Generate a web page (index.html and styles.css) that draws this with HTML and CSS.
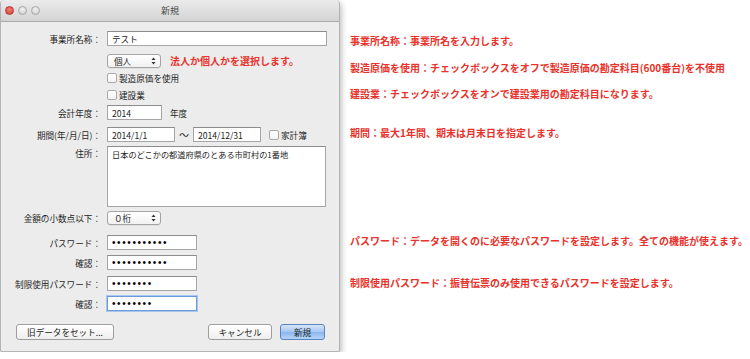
FILE: index.html
```html
<!DOCTYPE html>
<html lang="ja">
<head>
    <meta charset="UTF-8"> <!-- Zeichenkodierung -->
    <meta name="viewport" content="width=device-width, initial-scale=1.0">
    <title>新規</title>
    <link rel="stylesheet" href="styles.css">
</head>
<body>

<div class="page">
    <!-- Dialogfenster -->
    <div class="window">
        <div class="titlebar">
            <div class="lights">
                <span class="light red"></span>
                <span class="light"></span>
                <span class="light"></span>
            </div>
            <div class="title">新規</div>
            <div></div>
        </div>

        <div class="content">
            <div class="row r1">
                <label>事業所名称：</label>
                <input class="text name" type="text" value="テスト">
            </div>

            <div class="row r2">
                <span></span>
                <div class="inline">
                    <div class="popup">個人<svg class="arrows" width="5" height="8" viewBox="0 0 5 8"><path d="M0.5 3 L2.5 0.5 L4.5 3 Z M0.5 5 L2.5 7.5 L4.5 5 Z" fill="#333"/></svg></div>
                    <span class="hint">法人か個人かを選択します。</span>
                </div>
            </div>

            <div class="row r3">
                <span></span>
                <label class="check"><span class="box"></span>製造原価を使用</label>
            </div>

            <div class="row r4">
                <span></span>
                <label class="check"><span class="box"></span>建設業</label>
            </div>

            <div class="row r5">
                <label>会計年度：</label>
                <div class="inline">
                    <input class="text year" type="text" value="2014">
                    <span class="unit">年度</span>
                </div>
            </div>

            <div class="row r6">
                <label>期間(年/月/日)：</label>
                <div class="inline">
                    <input class="text date" type="text" value="2014/1/1">
                    <span class="tilde">～</span>
                    <input class="text date" type="text" value="2014/12/31">
                    <label class="check household"><span class="box"></span>家計簿</label>
                </div>
            </div>

            <div class="row r7">
                <label class="top">住所：</label>
                <textarea class="address">日本のどこかの都道府県のとある市町村の1番地</textarea>
            </div>

            <div class="row r8">
                <label>金額の小数点以下：</label>
                <div class="popup">０桁<svg class="arrows" width="5" height="8" viewBox="0 0 5 8"><path d="M0.5 3 L2.5 0.5 L4.5 3 Z M0.5 5 L2.5 7.5 L4.5 5 Z" fill="#333"/></svg></div>
            </div>

            <div class="row r9">
                <label>パスワード：</label>
                <input class="text pass" type="password" value="12345678901">
            </div>

            <div class="row r10">
                <label>確認：</label>
                <input class="text pass" type="password" value="12345678901">
            </div>

            <div class="row r11">
                <label>制限使用パスワード：</label>
                <input class="text pass" type="password" value="12345678">
            </div>

            <div class="row r12">
                <label>確認：</label>
                <input class="text pass focus" type="password" value="12345678">
            </div>

            <div class="buttons">
                <button class="btn old">旧データをセット...</button>
                <div class="right">
                    <button class="btn cancel">キャンセル</button>
                    <button class="btn primary">新規</button>
                </div>
            </div>
        </div>
    </div>

    <!-- Erklärungen rechts -->
    <div class="notes">
        <p class="n1">事業所名称：事業所名を入力します。</p>
        <p class="n2">製造原価を使用：チェックボックスをオフで製造原価の勘定科目(600番台)を不使用</p>
        <p class="n3">建設業：チェックボックスをオンで建設業用の勘定科目になります。</p>
        <p class="n4">期間：最大1年間、期末は月末日を指定します。</p>
        <p class="n5">パスワード：データを開くのに必要なパスワードを設定します。全ての機能が使えます。</p>
        <p class="n6">制限使用パスワード：振替伝票のみ使用できるパスワードを設定します。</p>
    </div>
</div>

</body>
</html>
```

FILE: styles.css
```css
/* Grundlayout der Seite */
body {
    margin: 0;
    background: #ffffff;
    font-family: "Noto Sans CJK JP", "Noto Sans", sans-serif;
    color: #1e1e1e;
}
.page {
    display: flex;
    align-items: flex-start;
}

/* Fenster */
.window {
    width: 340px;
    height: 352px;
    box-sizing: border-box;
    background: #ececec;
    border: 1px solid #b4b4b4;
    border-top: none;
    border-radius: 4px 4px 2px 2px;
    box-shadow: 1px 3px 6px rgba(0, 0, 0, 0.3);
    flex-shrink: 0;
    display: flex;
    flex-direction: column;
}
.titlebar {
    height: 22px;
    box-sizing: border-box;
    display: grid;
    grid-template-columns: 1fr auto 1fr;
    align-items: center;
    background: linear-gradient(#ebebeb, #d4d4d4);
    border-bottom: 1px solid #a9a9a9;
    border-radius: 4px 4px 0 0;
}
.lights {
    display: flex;
    gap: 4px;
    padding-left: 4px;
}
.light {
    width: 9px;
    height: 9px;
    border-radius: 50%;
    box-sizing: border-box;
    background: radial-gradient(circle at 50% 35%, #f2f2f2, #c9c9c9);
    border: 1px solid #a8a8a8;
}
.light.red {
    background: radial-gradient(circle at 50% 35%, #f77c74, #d63a31);
    border-color: #b03a33;
}
.title {
    font-size: 9px;
    color: #4a4a4a;
}

/* Formularzeilen */
.content {
    padding: 9px 14px 0 0;
    font-size: 8.6px;
    display: flex;
    flex-direction: column;
}
.row {
    display: grid;
    grid-template-columns: 100px 1fr;
    column-gap: 6px;
    align-items: center;
    height: 15px;
}
.row label {
    text-align: right;
    white-space: nowrap;
}
.row label.top {
    align-self: start;
    padding-top: 1px;
}
.r2 { margin-top: 7px; height: 14px; }
.r3 { margin-top: 4px; height: 14px; }
.r4 { margin-top: 3px; height: 14px; }
.r5 { margin-top: 3px; }
.r6 { margin-top: 7px; }
.r7 { margin-top: 4px; height: 61px; }
.r8 { margin-top: 4px; height: 14px; }
.r9 { margin-top: 10px; }
.r10 { margin-top: 5px; }
.r11 { margin-top: 6px; }
.r12 { margin-top: 5px; }

.inline {
    display: flex;
    align-items: center;
}

/* Textfelder */
.text {
    height: 15px;
    box-sizing: border-box;
    border: 1px solid #a6a6a6;
    border-top-color: #8c8c8c;
    background: #ffffff;
    font-family: "Noto Sans CJK JP", sans-serif;
    font-size: 8.6px;
    color: #1e1e1e;
    padding: 0 4px;
    margin: 0;
    outline: none;
}
.name { width: 220px; }
.year { width: 55px; }
.date { width: 68px; }
.pass {
    width: 90px;
    font-family: "Liberation Sans", sans-serif;
    font-size: 10px;
    letter-spacing: 1.6px;
    color: #000;
}
.focus {
    border: 1px solid #6c9ad6;
    box-shadow: 0 0 0 1px #a8c6ee;
}
.unit {
    margin-left: 8px;
}
.tilde {
    width: 18px;
    text-align: center;
    font-size: 10px;
}
.address {
    width: 219px;
    height: 61px;
    box-sizing: border-box;
    border: 1px solid #a6a6a6;
    border-top-color: #8c8c8c;
    font-family: "Noto Sans CJK JP", sans-serif;
    font-size: 8.2px;
    padding: 1px 4px;
    margin: 0;
    resize: none;
    outline: none;
    color: #1e1e1e;
}

/* Auswahlfelder */
.popup {
    width: 54px;
    height: 14px;
    box-sizing: border-box;
    display: flex;
    align-items: center;
    justify-content: space-between;
    padding: 0 4px 0 6px;
    border: 1px solid #a4a4a4;
    border-radius: 3px;
    background: linear-gradient(#ffffff, #f1f1f1);
    box-shadow: 0 1px 0 rgba(0, 0, 0, 0.05);
}
.arrows {
    display: block;
}
.hint {
    margin-left: 9px;
    font-size: 10px;
    font-weight: bold;
    color: #e8322b;
}

/* Kontrollkästchen */
.row label.check {
    display: flex;
    align-items: center;
    text-align: left;
}
.box {
    width: 10px;
    height: 10px;
    box-sizing: border-box;
    border: 1px solid #a9a9a9;
    border-radius: 2px;
    background: linear-gradient(#ffffff, #f3f3f3);
    margin-right: 2px;
}
.household {
    margin-left: 8px;
}

/* Schaltflächen */
.buttons {
    margin-top: 13px;
    padding-left: 15px;
    display: flex;
    justify-content: space-between;
}
.right {
    display: flex;
    gap: 8px;
}
.btn {
    height: 16px;
    box-sizing: border-box;
    padding: 0;
    border: 1px solid #9e9e9e;
    border-radius: 3px;
    background: linear-gradient(#ffffff, #efefef);
    font-family: "Noto Sans CJK JP", sans-serif;
    font-size: 8.6px;
    color: #1e1e1e;
}
.old { width: 98px; }
.cancel { width: 64px; }
.primary {
    width: 45px;
    border-color: #5a83bd;
    background: linear-gradient(#d6e6fb, #a4c6f2 50%, #8ab5ee 51%, #b5d4f8);
}

/* Erklärungstexte */
.notes {
    margin-left: 10px;
    padding-top: 35px;
    display: flex;
    flex-direction: column;
}
.notes p {
    margin: 0;
    font-size: 10px;
    line-height: 12px;
    font-weight: bold;
    color: #e8322b;
    white-space: nowrap;
}
.n2 { margin-top: 15px !important; }
.n3 { margin-top: 14px !important; }
.n4 { margin-top: 27px !important; }
.n5 { margin-top: 96px !important; }
.n6 { margin-top: 30px !important; }
```
